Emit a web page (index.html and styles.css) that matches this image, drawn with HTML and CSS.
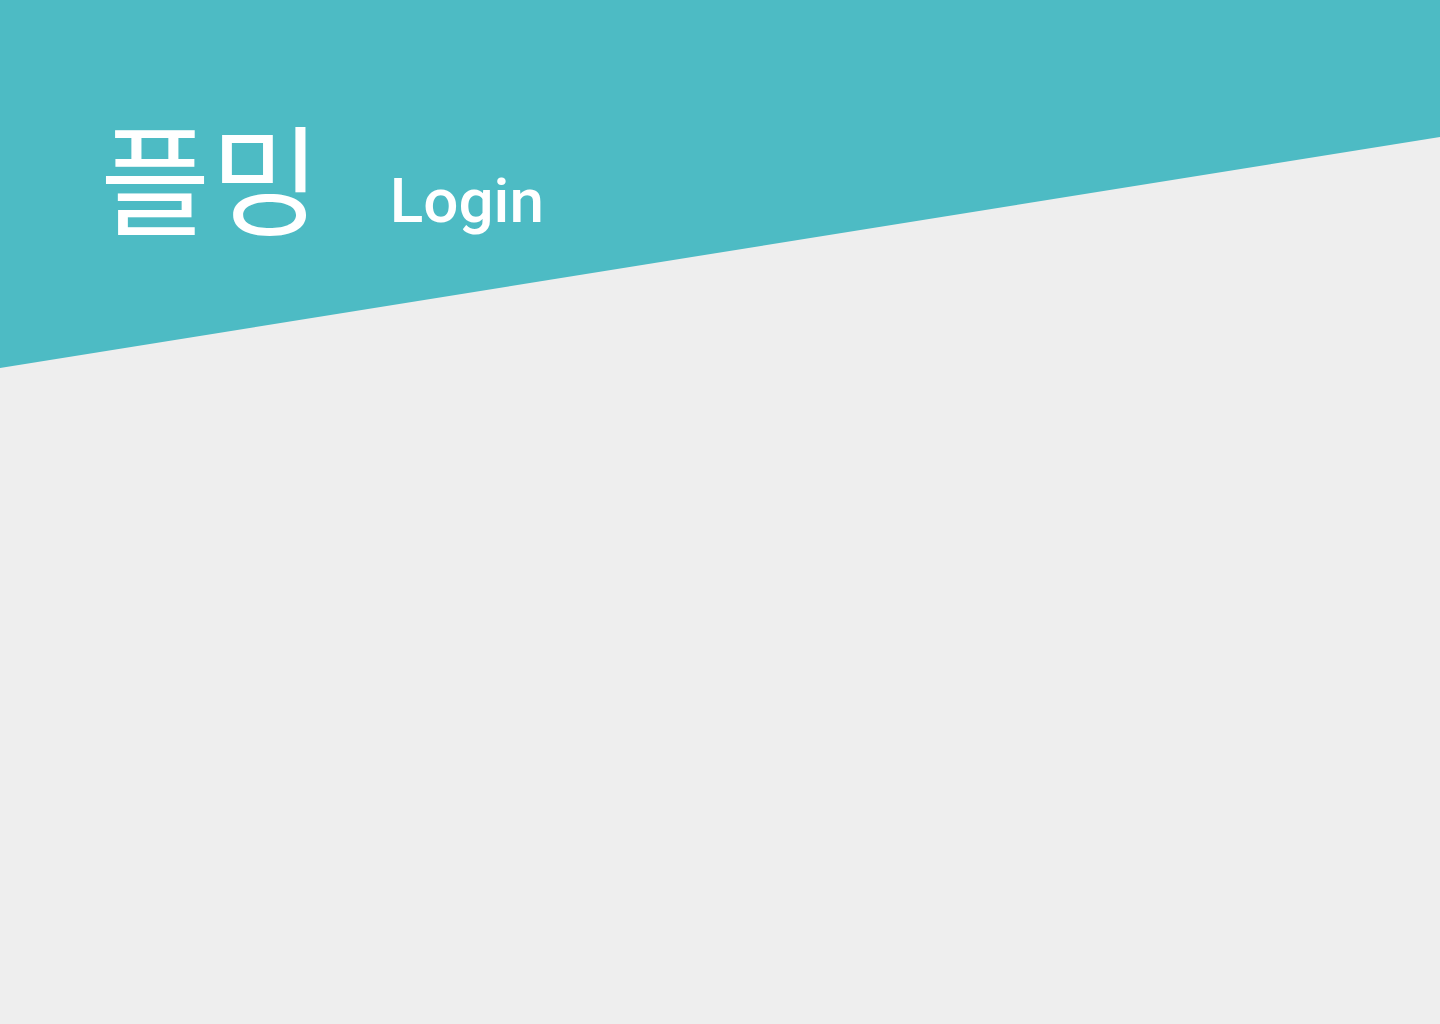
FILE: index.html
```html
<!DOCTYPE html>
<html lang="ko">
<head>
<meta charset="utf-8">
<title>플밍 Login</title>
<link rel="stylesheet" href="styles.css">
</head>
<body>
<header class="hero">
  <div class="hero-title">
    <span class="brand">플밍</span>
    <span class="page-name">Login</span>
  </div>
</header>
</body>
</html>
```

FILE: styles.css
```css
html, body {
  margin: 0;
  padding: 0;
}
body {
  background: #eeeeee;
  width: 1440px;
  height: 1024px;
  overflow: hidden;
  font-family: Roboto, "Noto Sans CJK KR", sans-serif;
}
.hero {
  height: 368px;
  background: #4dbbc4;
  clip-path: polygon(0 0, 100% 0, 100% 137px, 0 100%);
  box-sizing: border-box;
  padding: 115px 0 0 100px;
}
.hero-title {
  display: flex;
  align-items: flex-start;
  gap: 69px;
  color: #ffffff;
}
.brand {
  font-family: "Noto Sans CJK KR", sans-serif;
  font-size: 120px;
  font-weight: 400;
  line-height: 1;
}
.page-name {
  margin-top: 55px;
  font-family: Roboto, sans-serif;
  font-size: 62px;
  font-weight: 500;
  line-height: 1;
}
```
